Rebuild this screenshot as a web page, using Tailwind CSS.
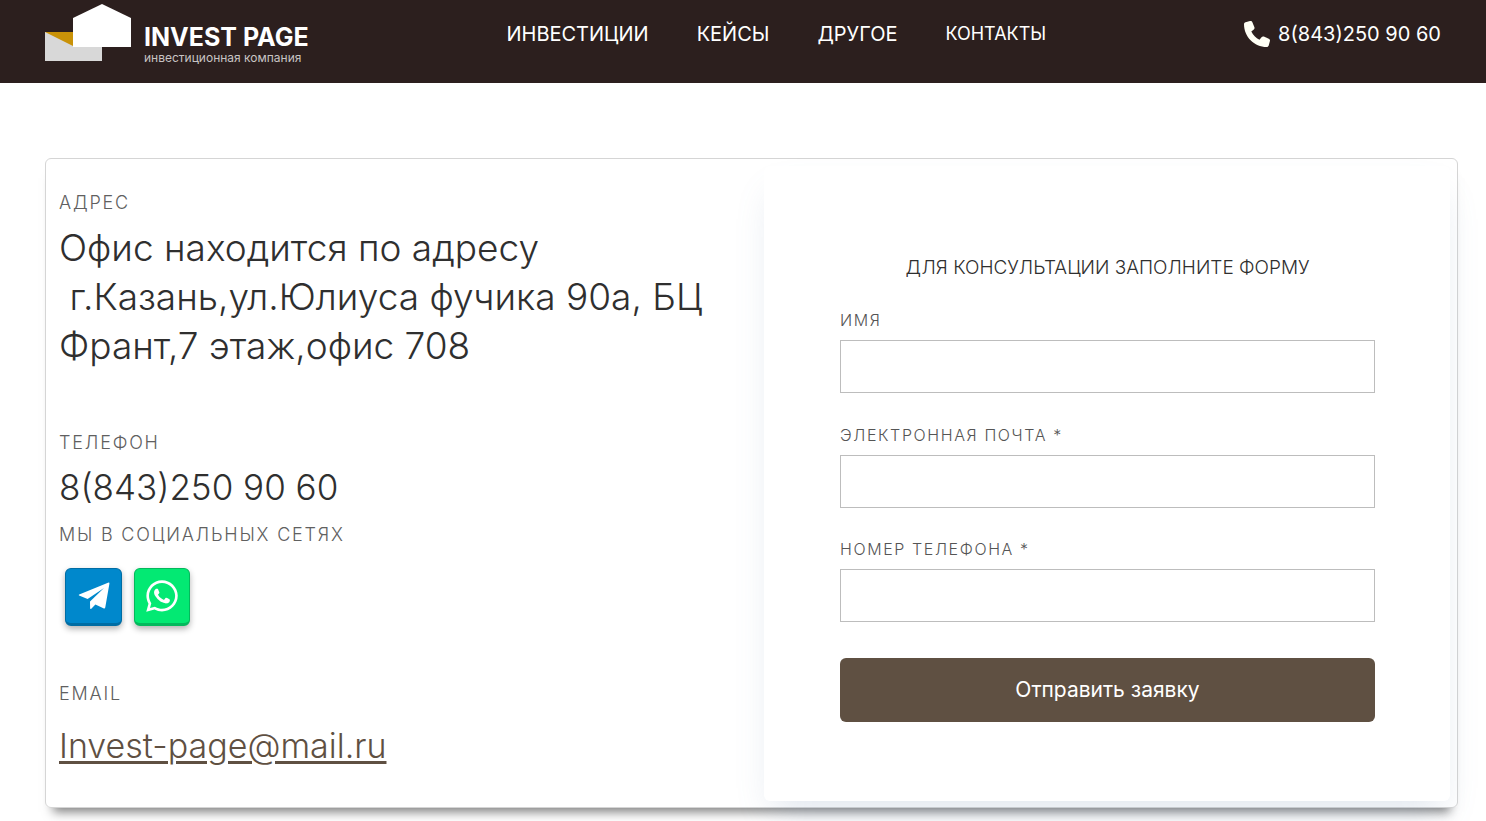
<!DOCTYPE html>
<html lang="ru">
<head>
<meta charset="utf-8">
<meta name="viewport" content="width=device-width, initial-scale=1">
<title>Invest Page — Контакты</title>
<script src="https://cdn.jsdelivr.net/npm/@tailwindcss/browser@4"></script>
</head>
<body class="bg-white font-['Inter','Open_Sans',sans-serif] text-[#2f2f2f] overflow-x-hidden">
<header class="flex h-[83px] items-start justify-between bg-[#2c1f1e] px-[45px] text-white">
  <a href="#" class="flex items-start gap-3 pt-1" aria-label="Invest Page, инвестиционная компания">
    <svg class="h-[58px] w-[87px]" viewBox="0 0 87 58" aria-hidden="true">
      <path fill="#d8d8d8" d="M0 28h57v29H0z"/>
      <path fill="#c99208" d="M0 28h30v15z"/>
      <path fill="#fff" d="M28 14 57 0l29 14v29H28z"/>
    </svg>
    <span class="flex flex-col pt-5">
      <span class="text-[25px] leading-[26px] font-bold">INVEST PAGE</span>
      <span class="text-[12px] leading-4 text-[#c8c4c4]">инвестиционная компания</span>
    </span>
  </a>
  <nav class="flex gap-12 pt-5 text-[20px] leading-7">
    <a href="#">ИНВЕСТИЦИИ</a>
    <a href="#">КЕЙСЫ</a>
    <a href="#">ДРУГОЕ</a>
    <a href="#" class="text-[18px]">КОНТАКТЫ</a>
  </nav>
  <a href="tel:88432509060" class="flex items-center gap-2 pt-5 text-[20px] leading-7">
    <svg class="size-[26px]" viewBox="0 0 512 512" fill="#fffff5" aria-hidden="true"><path d="M164.900 24.600c-7.700-18.600-28-28.500-47.400-23.200l-88 24C12.100 30.200 0 46 0 64c0 247.400 200.600 448 448 448 18 0 33.800-12.100 38.600-29.500l24-88c5.300-19.400-4.600-39.700-23.200-47.400l-96-40c-16.300-6.800-35.200-2.100-46.300 11.600L304.700 368C234.300 334.700 177.300 277.700 144 207.300l49.300-40.300c13.700-11.200 18.400-30 11.600-46.300z"/></svg>
    <span>8(843)250 90 60</span>
  </a>
</header>
<main class="pt-[75px] pr-7 pb-[13px] pl-[45px]">
  <div class="grid grid-cols-[1fr_686px] rounded-[6px] border border-[#d5d5d5] pr-[7px] pb-[6px] shadow-[0_12px_10px_-8px_rgba(0,0,0,0.5)]">
    <section class="pt-8 pl-[13px]">
      <h2 class="text-[18px] leading-6 font-light tracking-widest text-[#606060]">АДРЕС</h2>
      <p class="mt-2 text-[37px] leading-[49px] font-light">Офис находится по адресу<br>&nbsp;г.Казань,ул.Юлиуса фучика 90а, БЦ<br>Франт,7 этаж,офис 708</p>
      <h2 class="mt-[61px] text-[18px] leading-6 font-light tracking-widest text-[#606060]">ТЕЛЕФОН</h2>
      <p class="mt-2 text-[35px] leading-[49px] font-light">8(843)250 90 60</p>
      <h2 class="mt-[11px] text-[18px] leading-6 font-light tracking-widest text-[#606060]">МЫ В СОЦИАЛЬНЫХ СЕТЯХ</h2>
      <div class="mt-[21px] flex gap-3 pl-[6px]">
        <a href="#" aria-label="Telegram" class="flex h-[58px] w-[57px] items-center justify-center rounded-[6px] border border-b-3 border-[#006da4] bg-[#0088cc] shadow-[0_3px_6px_rgba(0,0,0,0.3)]">
          <svg class="h-[28px] w-[32px]" viewBox="0 0 32 28" fill="#fff" aria-hidden="true"><path d="M30 .7Q31.700 0 31.400 1.800L27.300 25.300Q27 27 25.400 26.300L17.400 22.600 13.300 26.800Q12.200 27.600 12.100 26L12 19.600 26 6 9.600 17 1.100 13.600Q.2 13 1.200 12.500Z"/></svg>
        </a>
        <a href="#" aria-label="WhatsApp" class="flex h-[58px] w-14 items-center justify-center rounded-[6px] border border-b-3 border-[#03b95c] bg-[#03e973] shadow-[0_3px_6px_rgba(0,0,0,0.3)]">
          <svg class="size-[36px]" viewBox="0 0 448 512" fill="#fff" aria-hidden="true"><path d="M380.900 97.100C339 55.100 283.200 32 223.900 32c-122.400 0-222 99.600-222 222 0 39.100 10.200 77.300 29.600 111L0 480l117.700-30.900c32.400 17.700 68.900 27 106.100 27h.1c122.300 0 224.100-99.600 224.100-222 0-59.300-25.200-115-67.100-157zm-157 341.600c-33.200 0-65.700-8.900-94-25.700l-6.700-4-69.800 18.300L72 359.200l-4.400-7c-18.500-29.400-28.200-63.300-28.200-98.200 0-101.700 82.800-184.500 184.600-184.500 49.300 0 95.600 19.200 130.400 54.100 34.800 34.900 56.200 81.200 56.100 130.500 0 101.800-84.900 184.600-186.600 184.600zM325.100 300.500c-5.500-2.800-32.800-16.200-37.900-18-5.100-1.900-8.800-2.800-12.500 2.800-3.700 5.600-14.300 18-17.600 21.800-3.200 3.700-6.500 4.200-12 1.400-32.600-16.300-54-29.100-75.500-66-5.700-9.800 5.700-9.100 16.300-30.300 1.800-3.700 .9-6.900-.5-9.700-1.400-2.800-12.500-30.100-17.100-41.200-4.500-10.800-9.100-9.300-12.500-9.500-3.200-.2-6.900-.2-10.600-.2-3.700 0-9.700 1.400-14.800 6.900-5.100 5.600-19.400 19-19.400 46.300 0 27.300 19.900 53.700 22.600 57.400 2.800 3.700 39.100 59.700 94.800 83.800 35.200 15.200 49 16.500 66.600 13.900 10.700-1.600 32.800-13.400 37.400-26.400 4.600-13 4.600-24.100 3.200-26.400-1.300-2.500-5-3.900-10.500-6.600z"/></svg>
        </a>
      </div>
      <h2 class="mt-14 text-[18px] leading-6 font-light tracking-widest text-[#606060]">EMAIL</h2>
      <p class="mt-4 text-[34px] leading-[48px] font-light"><a href="mailto:Invest-page@mail.ru" class="text-[#5f5042] underline decoration-[3px] underline-offset-[3px]">Invest-page@mail.ru</a></p>
    </section>
    <form class="mt-[7px] rounded-[6px] bg-white pr-[75px] pl-[76px] pt-[90px] pb-[79px] shadow-[0_20px_36px_-10px_rgba(100,130,170,0.2)]">
      <h1 class="text-center text-[19px] leading-6 font-light">ДЛЯ КОНСУЛЬТАЦИИ ЗАПОЛНИТЕ ФОРМУ</h1>
      <label for="name" class="mt-7 block text-[16px] leading-6 font-light tracking-widest text-[#555]">ИМЯ</label>
      <input id="name" type="text" class="mt-2 block h-[53px] w-full border border-[#bdbdbd] bg-white px-3">
      <label for="email" class="mt-[30px] block text-[16px] leading-6 font-light tracking-widest text-[#555]">ЭЛЕКТРОННАЯ ПОЧТА *</label>
      <input id="email" type="email" required class="mt-2 block h-[53px] w-full border border-[#bdbdbd] bg-white px-3 shadow-none">
      <label for="phone" class="mt-[29px] block text-[16px] leading-6 font-light tracking-widest text-[#555]">НОМЕР ТЕЛЕФОНА *</label>
      <input id="phone" type="tel" required class="mt-2 block h-[53px] w-full border border-[#bdbdbd] bg-white px-3 shadow-none">
      <button type="submit" class="mt-9 h-16 w-full rounded-[6px] bg-[#5f5042] text-[21px] text-white">Отправить заявку</button>
    </form>
  </div>
</main>
</body>
</html>
